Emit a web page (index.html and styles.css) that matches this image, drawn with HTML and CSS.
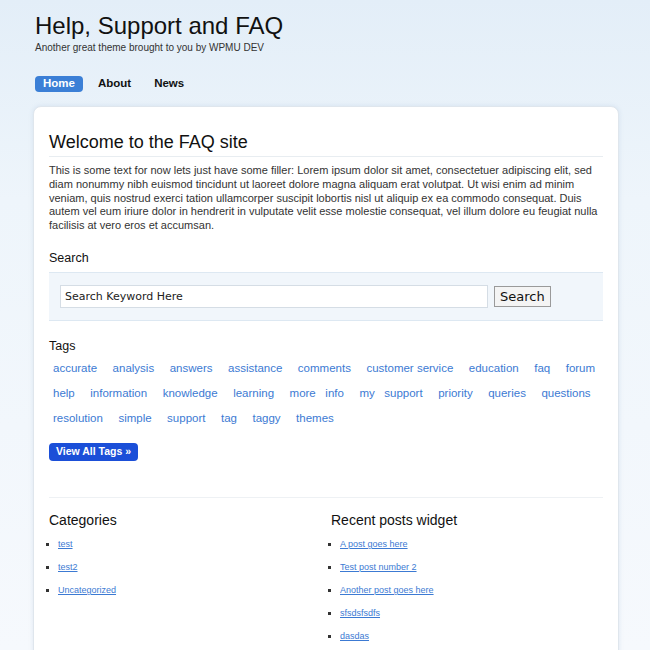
FILE: index.html
```html
<!DOCTYPE html>
<html lang="en">

<head>
    <meta charset="UTF-8">
    <meta name="viewport" content="width=device-width, initial-scale=1.0">
    <title>Help, Support and FAQ</title>
    <link rel="stylesheet" href="styles.css">
</head>

<body>
    <div class="header">
        <h1 class="site-title">Help, Support and FAQ</h1>
        <p class="tagline">Another great theme brought to you by WPMU DEV</p>
        <ul class="nav">
            <li><a href="#" class="current">Home</a></li>
            <li><a href="#">About</a></li>
            <li><a href="#">News</a></li>
        </ul>
    </div>

    <div class="content">
        <h2 class="page-title">Welcome to the FAQ site</h2>
        <p class="intro">This is some text for now lets just have some filler: Lorem ipsum dolor sit amet, consectetuer adipiscing elit, sed diam nonummy nibh euismod tincidunt ut laoreet dolore magna aliquam erat volutpat. Ut wisi enim ad minim veniam, quis nostrud exerci tation ullamcorper suscipit lobortis nisl ut aliquip ex ea commodo consequat. Duis autem vel eum iriure dolor in hendrerit in vulputate velit esse molestie consequat, vel illum dolore eu feugiat nulla facilisis at vero eros et accumsan.</p>

        <h3 class="section-title">Search</h3>
        <form class="search-box">
            <input type="text" class="search-input" value="Search Keyword Here">
            <button type="submit" class="search-button">Search</button>
        </form>

        <h3 class="section-title">Tags</h3>
        <div class="tags">
            <a href="#">accurate</a>
            <a href="#">analysis</a>
            <a href="#">answers</a>
            <a href="#">assistance</a>
            <a href="#">comments</a>
            <a href="#">customer service</a>
            <a href="#">education</a>
            <a href="#">faq</a>
            <a href="#">forum</a>
            <a href="#">help</a>
            <a href="#">information</a>
            <a href="#">knowledge</a>
            <a href="#">learning</a>
            <a href="#">more &nbsp; info</a>
            <a href="#">my &nbsp; support</a>
            <a href="#">priority</a>
            <a href="#">queries</a>
            <a href="#">questions</a>
            <a href="#">resolution</a>
            <a href="#">simple</a>
            <a href="#">support</a>
            <a href="#">tag</a>
            <a href="#">taggy</a>
            <a href="#">themes</a>
        </div>
        <a href="#" class="all-tags">View All Tags &raquo;</a>

        <div class="widgets">
            <div class="widget">
                <h3 class="widget-title">Categories</h3>
                <ul>
                    <li><a href="#">test</a></li>
                    <li><a href="#">test2</a></li>
                    <li><a href="#">Uncategorized</a></li>
                </ul>
            </div>
            <div class="widget">
                <h3 class="widget-title">Recent posts widget</h3>
                <ul>
                    <li><a href="#">A post goes here</a></li>
                    <li><a href="#">Test post number 2</a></li>
                    <li><a href="#">Another post goes here</a></li>
                    <li><a href="#">sfsdsfsdfs</a></li>
                    <li><a href="#">dasdas</a></li>
                </ul>
            </div>
        </div>
    </div>
</body>
</html>
```

FILE: styles.css
```css
body {
    font-family: 'Liberation Sans', Arial, sans-serif;
    color: #222;
    margin: 0;
    padding: 0;
    min-height: 650px;
    background: linear-gradient(#e3eef8, #eef5fb 200px, #f6f9fd 650px);
}

.header {
    padding: 11px 0 0 35px;
}

.site-title {
    font-size: 24px;
    font-weight: normal;
    color: #111;
    margin: 0;
    line-height: 30px;
}

.tagline {
    font-size: 10px;
    color: #333;
    margin: 1px 0 0;
}

.nav {
    list-style: none;
    margin: 23px 0 0;
    padding: 0;
    display: flex;
}

.nav a {
    display: block;
    font-size: 11.5px;
    font-weight: bold;
    color: #111;
    text-decoration: none;
    padding: 1px 8px 2px;
    margin-right: 7px;
    border-radius: 4px;
    line-height: 13px;
}

.nav a.current {
    background: #3b7fd6;
    color: #fff;
}

.content {
    margin: 14px 0 0 33px;
    width: 554px;
    padding: 25px 15px 20px;
    background: #fff;
    border: 1px solid #dfe6ed;
    border-radius: 8px;
    box-shadow: 0 0 4px rgba(150, 180, 210, 0.25);
}

.page-title {
    font-size: 18px;
    font-weight: normal;
    color: #111;
    margin: 0;
    padding-bottom: 3px;
    border-bottom: 1px solid #e8edf1;
}

.intro {
    font-size: 11px;
    line-height: 13.8px;
    color: #333;
    margin: 7px 0 0;
}

.section-title {
    font-size: 12.5px;
    font-weight: normal;
    color: #111;
    margin: 18px 0 7px;
}

.search-box {
    display: flex;
    align-items: center;
    background: #f1f6fb;
    border-top: 1px solid #dde8f2;
    border-bottom: 1px solid #dde8f2;
    padding: 12px 11px;
    margin: 0;
}

.search-input {
    width: 418px;
    height: 19px;
    padding: 1px 4px;
    border: 1px solid #d5dde5;
    font-family: 'DejaVu Sans', sans-serif;
    font-size: 11px;
    color: #222;
    margin: 0;
}

.search-button {
    margin-left: 6px;
    height: 21px;
    padding: 0 5px;
    font-family: 'DejaVu Sans', sans-serif;
    font-size: 13px;
    color: #111;
    background: #f4f4f4;
    border: 1px solid #9a9a9a;
    border-radius: 0;
}

.tags {
    display: flex;
    flex-wrap: wrap;
    column-gap: 15.5px;
    row-gap: 9px;
    padding-left: 4px;
    margin-top: 1px;
}

.tags a {
    font-size: 11.5px;
    color: #3c7ad3;
    text-decoration: none;
    line-height: 16px;
}

.all-tags {
    display: inline-block;
    margin-top: 17px;
    background: #1b4fd8;
    color: #fff;
    font-size: 10.5px;
    font-weight: bold;
    text-decoration: none;
    padding: 2px 7px 3px;
    border-radius: 4px;
    line-height: 13px;
}

.widgets {
    display: flex;
    margin-top: 36px;
    padding-top: 14px;
    border-top: 1px solid #eef1f4;
}

.widget {
    width: 282px;
    flex-shrink: 0;
}

.widget + .widget {
    flex: 1;
}

.widget-title {
    font-size: 14px;
    font-weight: normal;
    color: #111;
    margin: 0 0 10px;
}

.widget ul {
    list-style: square;
    margin: 0;
    padding-left: 9px;
    color: #333;
    font-size: 9px;
}

.widget li {
    line-height: 12px;
    margin-bottom: 11px;
}

.widget a {
    color: #3c7ad3;
}
```
